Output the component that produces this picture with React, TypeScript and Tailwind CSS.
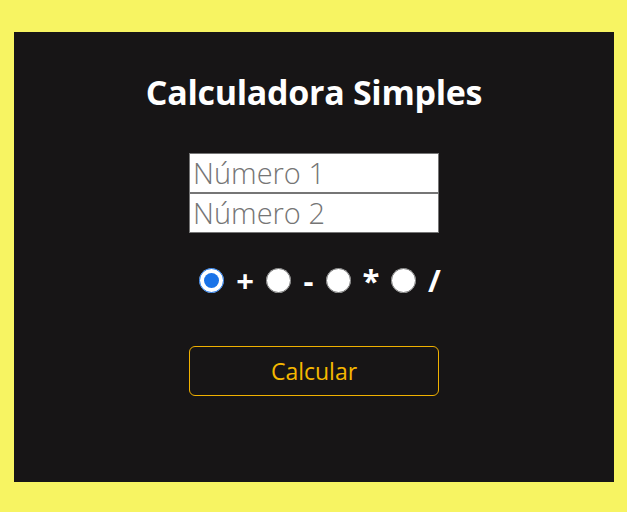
import { useState } from "react";

// glyph box widths taken so the labels sit where the picture has them
const OPS = [
  { v: "+", w: "w-[42px]" },
  { v: "-", w: "w-[35px]" },
  { v: "*", w: "w-[40px]" },
  { v: "/", w: "w-[37px]" },
] as const;

const field =
  "h-[40px] w-[250px] border border-[#767676] bg-white px-[3px] text-[29px] font-light text-black placeholder:text-[#757575] focus:outline-none";

export default function App() {
  const [op, setOp] = useState<string>("+");

  return (
    <div className="min-h-[512px] w-full bg-[#f7f462] pl-[14px] pr-[13px] pt-[32px] pb-[30px] font-['Open_Sans',sans-serif]">
      <div className="flex h-[450px] w-[600px] flex-col items-center bg-[#171516] pt-[40px]">
        <h1 className="text-[34px] font-bold leading-[40px] tracking-[-0.3px] text-white">
          Calculadora Simples
        </h1>

        <div className="mt-[41px] flex flex-col">
          <input type="text" placeholder="Número 1" className={field} />
          <input type="text" placeholder="Número 2" className={field} />
        </div>

        {/* operation radios */}
        <div className="mt-[35px] flex w-[250px] items-center pl-[10px]">
          {OPS.map((o) => (
            <label key={o.v} className="flex items-center">
              <input
                type="radio"
                name="op"
                checked={op === o.v}
                onChange={() => setOp(o.v)}
                className="m-0 h-[25px] w-[25px] accent-[#1a73e8]"
              />
              <span className={`${o.w} text-center text-[31px] font-bold leading-[25px] text-white`}>
                {o.v}
              </span>
            </label>
          ))}
        </div>

        <button
          type="button"
          className="mt-[53px] h-[50px] w-[250px] rounded-[6px] border border-[#f0b000] text-[23px] text-[#f5b800]"
        >
          Calcular
        </button>
      </div>
    </div>
  );
}
